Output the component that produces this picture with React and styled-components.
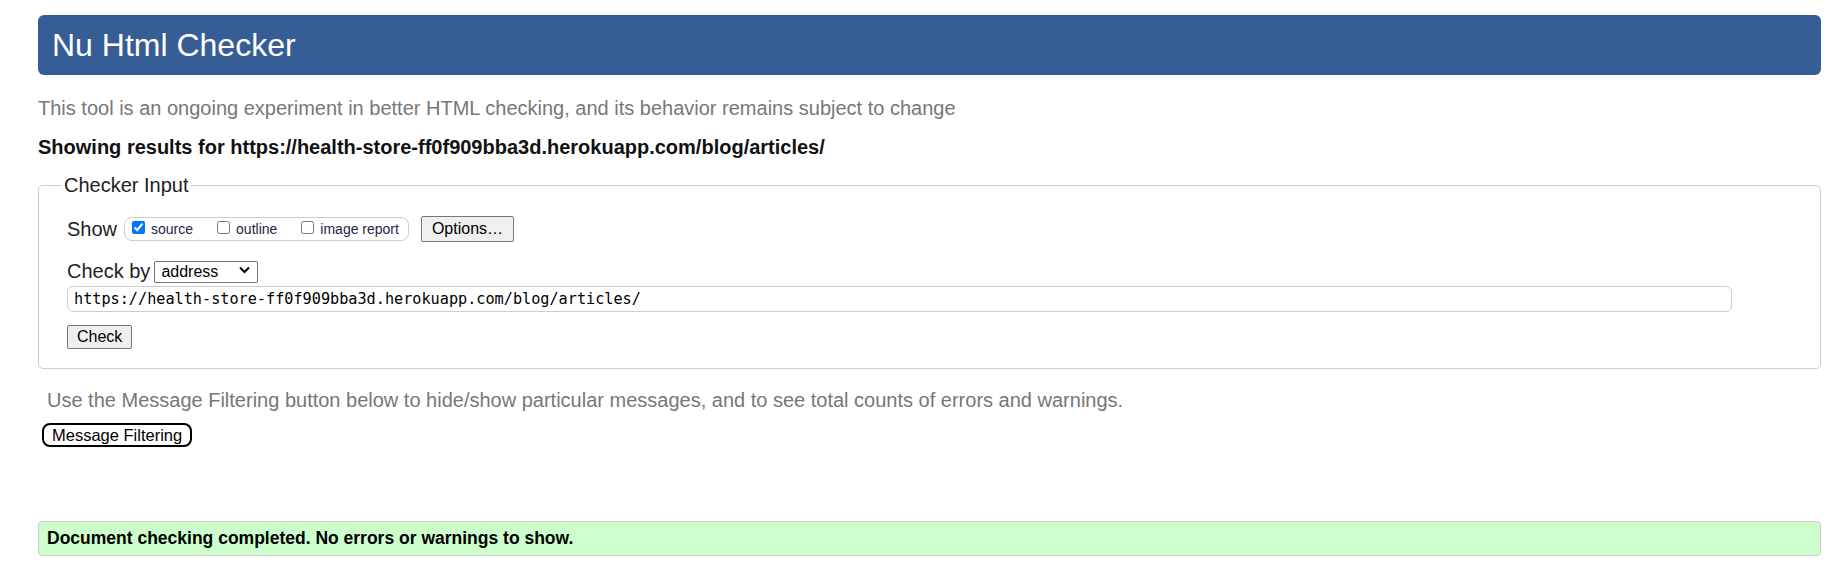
import React from "react";
import styled, { createGlobalStyle } from "styled-components";

const GlobalStyle = createGlobalStyle`
  html, body { margin: 0; padding: 0; background: #ffffff; }
  body {
    font-family: "Liberation Sans", Arial, sans-serif;
    font-size: 20px;
    color: #222;
  }
`;

const Main = styled.main`
  padding: 15px 26px 20px 38px;
`;

const Header = styled.h1`
  margin: 0;
  height: 60px;
  padding: 0 14px;
  border-radius: 6px;
  background: #365d95;
  color: #ffffff;
  font-size: 32px;
  font-weight: normal;
  line-height: 60px;
`;

const Intro = styled.p`
  margin: 22px 0 0;
  line-height: 23px;
  color: #777777;
`;

const Showing = styled.p`
  margin: 16px 0 0;
  line-height: 23px;
  font-weight: bold;
  color: #111111;
`;

const Fieldset = styled.fieldset`
  margin: 15px 0 0;
  padding: 0 0 19px 28px;
  border: 1px solid #cccccc;
  border-radius: 5px;
  min-width: 0;
`;

const Legend = styled.legend`
  margin-left: -5px;
  padding: 0 2px;
  font-size: 20px;
  line-height: 22px;
  color: #222;
`;

const Row = styled.div`
  display: flex;
  align-items: center;
  margin-top: ${(p) => p.$mt || 0}px;
  height: ${(p) => p.$h || 24}px;
`;

const RowLabel = styled.span`
  font-size: 20px;
  color: #222;
  margin-right: ${(p) => p.$mr || 7}px;
`;

const CheckGroup = styled.span`
  display: inline-flex;
  align-items: center;
  gap: 24px;
  height: 22px;
  padding: 0 9px 0 7px;
  border: 1px solid #cccccc;
  border-radius: 8px;
`;

const CheckLabel = styled.label`
  display: inline-flex;
  align-items: center;
  font-size: 14px;
  color: #1c2744;
`;

const Checkbox = styled.input`
  width: 13px;
  height: 13px;
  margin: 0 6px 3px 0;
  accent-color: #0075ff;
`;

const Button = styled.button`
  font-family: "Liberation Sans", Arial, sans-serif;
  font-size: 16px;
  color: #000;
  height: ${(p) => p.$h || 24}px;
  padding: 0 ${(p) => p.$px || 9}px;
  margin-left: ${(p) => p.$ml || 0}px;
  background: #efefef;
  border: 1px solid #767676;
  border-radius: 2px;
`;

const SelectWrap = styled.span`
  position: relative;
  display: inline-block;
`;

const Select = styled.select`
  appearance: none;
  -webkit-appearance: none;
  width: 104px;
  height: 22px;
  padding: 0 0 0 6px;
  font-family: "Liberation Sans", Arial, sans-serif;
  font-size: 16px;
  color: #000;
  background: #fff;
  border: 1px solid #767676;
  border-radius: 2px;
`;

const Chevron = styled.svg`
  position: absolute;
  right: 8px;
  top: 7px;
  pointer-events: none;
`;

const UrlInput = styled.input`
  display: block;
  box-sizing: border-box;
  width: 1665px;
  height: 26px;
  margin-top: 3px;
  padding: 0 6px;
  font-family: "DejaVu Sans Mono", "Liberation Mono", monospace;
  font-size: 15.2px;
  color: #000;
  border: 1px solid #cccccc;
  border-radius: 6px;
`;

const CheckRow = styled.div`
  margin-top: 12px;
`;

const Hint = styled.p`
  margin: 20px 0 0;
  padding-left: 9px;
  line-height: 23px;
  color: #777777;
`;

const FilterButton = styled.button`
  display: block;
  margin: 11px 0 0 4px;
  height: 24px;
  padding: 0 8px;
  font-family: "Liberation Sans", Arial, sans-serif;
  font-size: 16.5px;
  color: #000;
  background: #fff;
  border: 2px solid #000;
  border-radius: 8px;
`;

const Success = styled.div`
  margin-top: 74px;
  height: 35px;
  box-sizing: border-box;
  display: flex;
  align-items: center;
  padding-left: 8px;
  background: #ccffcc;
  border: 1px solid #cccccc;
  border-radius: 4px;
  font-size: 17.5px;
  font-weight: bold;
  color: #000;
`;

const URL = "https://health-store-ff0f909bba3d.herokuapp.com/blog/articles/";

export default function App() {
  return (
    <>
      <GlobalStyle />
      <Main>
        <Header>Nu Html Checker</Header>
        <Intro>
          This tool is an ongoing experiment in better HTML checking, and its
          behavior remains subject to change
        </Intro>
        <Showing>Showing results for {URL}</Showing>
        <Fieldset>
          <Legend>Checker Input</Legend>
          <Row $mt={20} $h={26}>
            <RowLabel>Show</RowLabel>
            <CheckGroup>
              <CheckLabel>
                <Checkbox type="checkbox" defaultChecked />
                source
              </CheckLabel>
              <CheckLabel>
                <Checkbox type="checkbox" />
                outline
              </CheckLabel>
              <CheckLabel>
                <Checkbox type="checkbox" />
                image report
              </CheckLabel>
            </CheckGroup>
            <Button $h={26} $px={10} $ml={12}>
              Options…
            </Button>
          </Row>
          <Row $mt={17} $h={24}>
            <RowLabel $mr={4}>Check by</RowLabel>
            <SelectWrap>
              <Select defaultValue="address">
                <option value="address">address</option>
                <option value="file">file upload</option>
                <option value="text">text input</option>
              </Select>
              <Chevron width="11" height="8" viewBox="0 0 11 8">
                <path
                  d="M1 1.5 L5.5 6 L10 1.5"
                  fill="none"
                  stroke="#000"
                  strokeWidth="2"
                />
              </Chevron>
            </SelectWrap>
          </Row>
          <UrlInput type="url" defaultValue={URL} />
          <CheckRow>
            <Button $h={24} $px={9}>
              Check
            </Button>
          </CheckRow>
        </Fieldset>
        <Hint>
          Use the Message Filtering button below to hide/show particular
          messages, and to see total counts of errors and warnings.
        </Hint>
        <FilterButton>Message Filtering</FilterButton>
        <Success>Document checking completed. No errors or warnings to show.</Success>
      </Main>
    </>
  );
}
